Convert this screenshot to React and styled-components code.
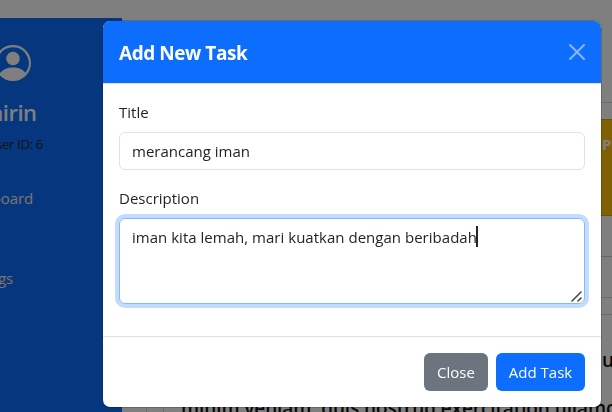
import React from "react";
import styled, { createGlobalStyle } from "styled-components";

const Global = createGlobalStyle`
  * { box-sizing: border-box; }
  body { margin: 0; overflow: hidden; background: #fff; color: #212529;
    font-family: "Open Sans", "Noto Sans", sans-serif; font-size: 15px; line-height: 24px; }
`;
const Page = styled.div`
  display: flex; height: 412px; padding-top: 18px; overflow: hidden;
`;
const Sidebar = styled.aside`
  width: 122px; flex: none; height: 394px; background: #0d6efd; color: #fff;
  overflow: hidden; display: flex; flex-direction: column;
`;
const Profile = styled.div`
  width: 88px; margin-left: -31px; padding-top: 27px;
  display: flex; flex-direction: column; align-items: center;
`;
const Name = styled.div`
  align-self: flex-end; margin: 16px 20.5px 0 0; white-space: nowrap;
  font-size: 22px; line-height: 30px; font-weight: 600; letter-spacing: -0.5px;
`;
const UserId = styled.div`
  align-self: flex-end; margin: 7px 14px 0 0; white-space: nowrap;
  color: #212529; font-size: 13.2px; line-height: 20px; letter-spacing: -0.35px;
`;
const Nav = styled.nav`
  width: 80px; margin-top: 32px; display: flex; flex-direction: column; gap: 56px;
`;
const NavItem = styled.a`
  width: ${(p) => p.$end}px; display: flex; justify-content: flex-end;
  white-space: nowrap; color: #f8e8dc; letter-spacing: -0.1px;
`;
const Main = styled.main`
  flex: 1; min-width: 0; margin-right: -60px; padding-left: 24px;
`;
const Board = styled.section`
  margin-top: 84px; height: 196px; border: solid #d5d5d5; border-width: 1px 0;
  padding-top: 16px;
`;
const Banner = styled.div`
  height: 97px; background: #ffc107; color: #fff; font-weight: 700;
  border: 1px solid #d8a406; padding: 12px 0 0 455px; white-space: nowrap;
`;
const Rule = styled.div`
  margin-top: 40px; height: 1px; background: #d0d0d0;
`;
const Notes = styled.section`
  margin-top: 16px; border: 1px solid #d5d5d5; height: 120px;
`;
const NotesInner = styled.div`
  margin-left: 16px; border-left: 1px solid #d5d5d5; height: 119px;
  padding: 33px 0 0 17px; white-space: nowrap; color: #111;
  font-size: 19px; line-height: 24px; font-weight: 600;
`;
const Line = styled.div`
  height: 24px; margin-bottom: 24px; padding-left: ${(p) => p.$indent || 0}px;
  letter-spacing: ${(p) => p.$track || 0}px;
`;
const Backdrop = styled.div`
  position: fixed; inset: 0; background: rgba(0, 0, 0, 0.5);
`;
const Dialog = styled.div`
  position: fixed; left: 102px; top: 20px; width: 500px;
  border: 1px solid rgba(0, 0, 0, 0.175); border-radius: 8px;
  background: #fff; background-clip: padding-box;
`;
const Header = styled.header`
  height: 63px; padding: 0 16px; display: flex; align-items: center;
  justify-content: space-between; color: #fff; background: #0d6efd;
  background-clip: padding-box;
  border-bottom: 1px solid #dee2e6; border-radius: 7px 7px 0 0;
`;
const Heading = styled.h5`
  margin: 2px 0 0; font-size: 19px; line-height: 30px; font-weight: 700; letter-spacing: -0.45px;
`;
const CloseIcon = styled.svg`
  width: 16px; height: 16px; display: block; opacity: 0.5;
`;
const Body = styled.div`
  padding: 16px;
`;
const Field = styled.div`
  margin-bottom: ${(p) => (p.$last ? 0 : 16)}px;
`;
const Label = styled.label`
  display: block; height: 24px; margin-bottom: 8px;
`;
const Text = styled.span`
  display: inline-block; white-space: nowrap; letter-spacing: ${(p) => p.$track || 0}px;
`;
const Control = styled.div`
  position: relative; display: flex; align-items: flex-start;
  height: ${(p) => p.$height || 38}px; padding: 6px 12px; border-radius: 6px;
  border: 1px solid ${(p) => (p.$focus ? "#86b7fe" : "#dee2e6")};
  box-shadow: ${(p) => (p.$focus ? "0 0 0 4px rgba(13, 110, 253, 0.25)" : "none")};
`;
const Caret = styled.i`
  width: 2px; height: 21px; margin: 1px 0 0 -1px; background: #212529;
`;
const Grip = styled.svg`
  position: absolute; right: 1px; bottom: 1px; width: 12px; height: 12px;
`;
const Footer = styled.footer`
  height: 71px; margin-top: 16px; border-top: 1px solid #dee2e6; padding: 16px;
  display: flex; justify-content: flex-end; gap: 8px;
`;
const Button = styled.button`
  width: ${(p) => p.$width}px; height: 38px; padding: 0; border: 0; border-radius: 6px;
  color: #fff; background: ${(p) => (p.$primary ? "#0d6efd" : "#6c757d")};
  font: inherit;
`;

export default function App() {
  return (
    <>
      <Global />
      <Page>
        <Sidebar>
          <Profile>
            <svg width="36" height="36" viewBox="0 0 16 16" fill="#fff">
              <path d="M11 6a3 3 0 1 1-6 0 3 3 0 0 1 6 0" />
              <path fillRule="evenodd" d="M0 8a8 8 0 1 1 16 0A8 8 0 0 1 0 8m8-7a7 7 0 0 0-5.468 11.37C3.242 11.226 4.805 10 8 10s4.757 1.225 5.468 2.37A7 7 0 0 0 8 1" />
            </svg>
            <Name>Khairin</Name>
            <UserId>User ID: 6</UserId>
          </Profile>
          <Nav>
            <NavItem $end={33}>Dashboard</NavItem>
            <NavItem $end={13}>Settings</NavItem>
          </Nav>
        </Sidebar>
        <Main>
          <Board>
            <Banner>Pending</Banner>
            <Rule />
          </Board>
          <Notes>
            <NotesInner>
              <Line $indent={421}>ut labore</Line>
              <Line $track={-0.1}>minim veniam, quis nostrud exercitation ullamco</Line>
            </NotesInner>
          </Notes>
        </Main>
      </Page>
      <Backdrop />
      <Dialog role="dialog">
        <Header>
          <Heading>Add New Task</Heading>
          <CloseIcon viewBox="0 0 16 16" fill="#fff">
            <path d="M.293.293a1 1 0 0 1 1.414 0L8 6.586 14.293.293a1 1 0 1 1 1.414 1.414L9.414 8l6.293 6.293a1 1 0 0 1-1.414 1.414L8 9.414l-6.293 6.293a1 1 0 0 1-1.414-1.414L6.586 8 .293 1.707a1 1 0 0 1 0-1.414" />
          </CloseIcon>
        </Header>
        <Body>
          <Field>
            <Label><Text>Title</Text></Label>
            <Control><Text>merancang iman</Text></Control>
          </Field>
          <Field $last>
            <Label><Text>Description</Text></Label>
            <Control $height={86} $focus>
              <Text $track={0.02}>iman kita lemah, mari kuatkan dengan beribadah</Text>
              <Caret />
              <Grip viewBox="0 0 12 12" stroke="#444" strokeWidth="1.5">
                <path d="M.5 11.5 10.5 1.5M6.5 11.5 10.5 7.5" />
              </Grip>
            </Control>
          </Field>
        </Body>
        <Footer>
          <Button $width={64}><Text>Close</Text></Button>
          <Button $width={89} $primary><Text>Add Task</Text></Button>
        </Footer>
      </Dialog>
    </>
  );
}
